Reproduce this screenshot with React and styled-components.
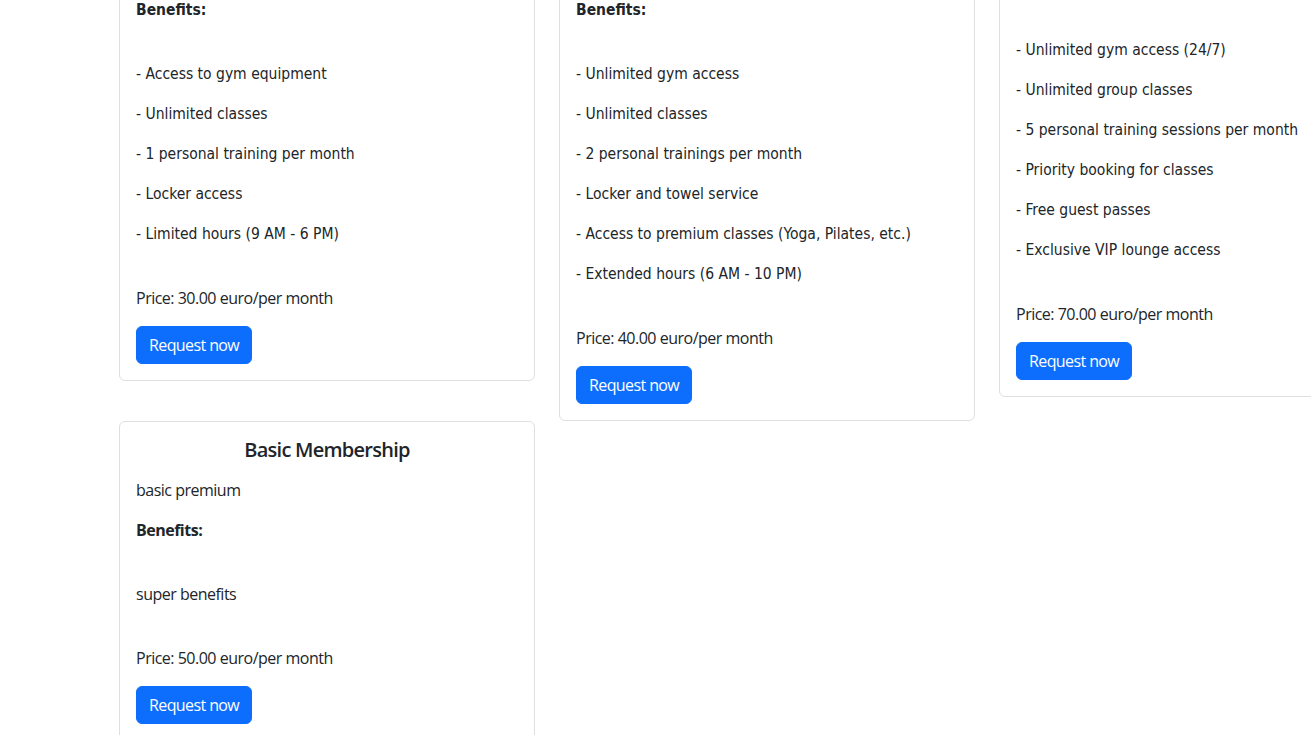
import React, { useLayoutEffect, useRef } from "react";
import styled, { createGlobalStyle } from "styled-components";

const Global = createGlobalStyle`
  html, body { margin: 0; padding: 0; overflow: hidden; background: #fff; }
  body {
    font-family: "Open Sans", "Noto Sans", sans-serif;
    font-size: 16px;
    line-height: 1.5;
    color: #212529;
  }
  * { box-sizing: border-box; }
`;

const Viewport = styled.div`
  width: 100vw;
  height: 100vh;
  overflow: hidden;
`;

const Page = styled.main`
  padding: 24px 0 48px 107px;
  width: 1427px;
`;

const Grid = styled.div`
  display: flex;
  flex-wrap: wrap;
  align-items: flex-start;
  width: 1320px;
`;

const Column = styled.div`
  flex: 0 0 440px;
  padding: 0 12px;
`;

const Card = styled.article`
  display: flex;
  flex-direction: column;
  align-items: flex-start;
  border: 1px solid #dfdfdf;
  border-radius: 6px;
  background: #fff;
  padding: 16px;
`;

const Title = styled.h5`
  align-self: stretch;
  margin: 0 0 16px;
  font-size: 20px;
  line-height: 24px;
  font-weight: 600;
  text-align: center;
  letter-spacing: -0.75px;
`;

const Text = styled.p`
  margin: 0 0 16px;
  line-height: 24px;
  font-weight: ${(p) => (p.$bold ? 700 : 400)};
  letter-spacing: -0.5px;
`;

const Benefits = styled.div`
  padding: 24px 0;
`;

const Benefit = styled.p`
  margin: 0 0 16px;
  line-height: 24px;
  font-family: ${(p) =>
    p.$plain ? '"Open Sans", "Noto Sans", sans-serif' : '"DejaVu Sans Condensed", "DejaVu Sans", sans-serif'};
  font-stretch: ${(p) => (p.$plain ? "normal" : "condensed")};
  font-size: ${(p) => (p.$plain ? "16px" : "15.5px")};
  letter-spacing: ${(p) => (p.$plain ? "-0.5px" : "0")};
`;

const Label = styled(Text)`
  font-family: ${(p) =>
    p.$plain ? '"Open Sans", "Noto Sans", sans-serif' : '"DejaVu Sans Condensed", "DejaVu Sans", sans-serif'};
  font-stretch: ${(p) => (p.$plain ? "normal" : "condensed")};
  font-size: ${(p) => (p.$plain ? "16px" : "15.5px")};
  letter-spacing: ${(p) => (p.$plain ? "-0.5px" : "0")};
`;

const Button = styled.button`
  display: inline-block;
  height: 38px;
  padding: 6px 12px;
  border: 1px solid #0d6efd;
  border-radius: 6px;
  background: #0d6efd;
  color: #fff;
  font-family: inherit;
  font-size: 16px;
  line-height: 24px;
  letter-spacing: -0.6px;
  cursor: pointer;
`;

const plans = [
  {
    title: "Standard Membership",
    description: "standard plan",
    benefits: [
      "- Access to gym equipment",
      "- Unlimited classes",
      "- 1 personal training per month",
      "- Locker access",
      "- Limited hours (9 AM - 6 PM)",
    ],
    price: "30.00",
  },
  {
    title: "Premium Membership",
    description: "premium plan",
    benefits: [
      "- Unlimited gym access",
      "- Unlimited classes",
      "- 2 personal trainings per month",
      "- Locker and towel service",
      "- Access to premium classes (Yoga, Pilates, etc.)",
      "- Extended hours (6 AM - 10 PM)",
    ],
    price: "40.00",
  },
  {
    title: "VIP Membership",
    description: "",
    benefits: [
      "- Unlimited gym access (24/7)",
      "- Unlimited group classes",
      "- 5 personal training sessions per month",
      "- Priority booking for classes",
      "- Free guest passes",
      "- Exclusive VIP lounge access",
    ],
    price: "70.00",
  },
  {
    title: "Basic Membership",
    description: "basic premium",
    benefits: ["super benefits"],
    plain: true,
    price: "50.00",
  },
];

export default function App() {
  const ref = useRef(null);
  useLayoutEffect(() => {
    if (ref.current) ref.current.scrollTop = 123;
  }, []);
  return (
    <>
      <Global />
      <Viewport ref={ref}>
        <Page>
          <Grid>
            {plans.map((p) => (
              <Column key={p.title}>
                <Card>
                  <Title>{p.title}</Title>
                  <Text>{p.description}</Text>
                  <Label $bold $plain={p.plain}>Benefits:</Label>
                  <Benefits>
                    {p.benefits.map((b) => (
                      <Benefit key={b} $plain={p.plain}>{b}</Benefit>
                    ))}
                  </Benefits>
                  <Text>Price: {p.price} euro/per month</Text>
                  <Button type="button">Request now</Button>
                </Card>
              </Column>
            ))}
          </Grid>
        </Page>
      </Viewport>
    </>
  );
}
